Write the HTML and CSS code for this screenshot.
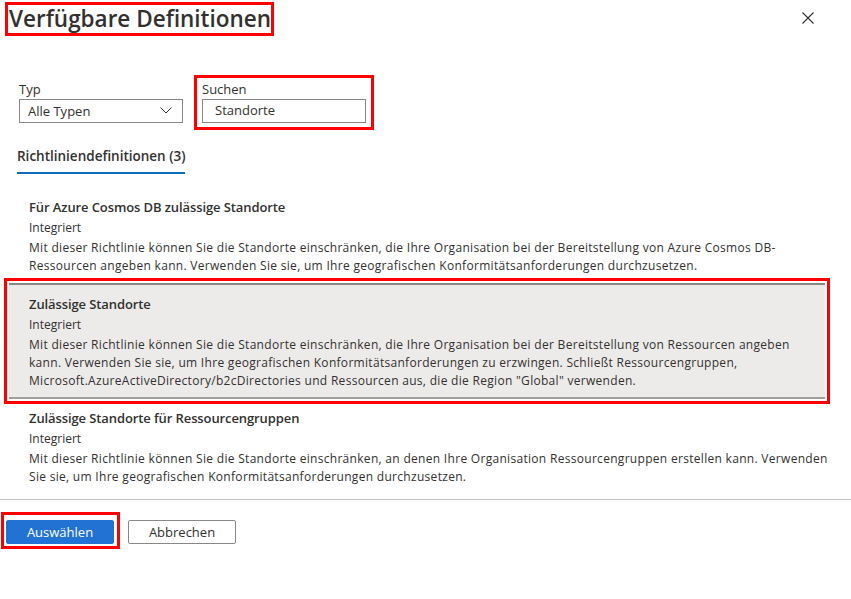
FILE: index.html
```html
<!DOCTYPE html>
<html lang="de">
<head>
<meta charset="utf-8">
<title>Verfügbare Definitionen</title>
<link rel="stylesheet" href="styles.css">
</head>
<body>
<div class="panel">
  <header class="head">
    <h1 class="title mark">Verfügbare Definitionen</h1>
    <button class="close" aria-label="Schließen">
      <svg width="12" height="12" viewBox="0 0 12 12"><path d="M0.5 0.5 L11.5 11.5 M11.5 0.5 L0.5 11.5" stroke="#323130" stroke-width="1.1" fill="none"/></svg>
    </button>
  </header>

  <div class="filters">
    <div class="field typ">
      <label class="lbl">Typ</label>
      <div class="select">
        <span>Alle Typen</span>
        <svg width="12" height="7" viewBox="0 0 12 7"><path d="M0.5 0.5 L6 6 L11.5 0.5" stroke="#323130" stroke-width="1" fill="none"/></svg>
      </div>
    </div>
    <div class="field search mark">
      <label class="lbl">Suchen</label>
      <div class="input">Standorte</div>
    </div>
  </div>

  <div class="tabs"><span class="tab">Richtliniendefinitionen (3)</span></div>

  <div class="list">
    <div class="item">
      <div class="name">Für Azure Cosmos DB zulässige Standorte</div>
      <div class="kind">Integriert</div>
      <div class="desc">Mit dieser Richtlinie können Sie die Standorte einschränken, die Ihre Organisation bei der Bereitstellung von Azure Cosmos DB-<br>Ressourcen angeben kann. Verwenden Sie sie, um Ihre geografischen Konformitätsanforderungen durchzusetzen.</div>
    </div>
    <div class="item selected">
      <div class="name">Zulässige Standorte</div>
      <div class="kind">Integriert</div>
      <div class="desc">Mit dieser Richtlinie können Sie die Standorte einschränken, die Ihre Organisation bei der Bereitstellung von Ressourcen angeben<br>kann. Verwenden Sie sie, um Ihre geografischen Konformitätsanforderungen zu erzwingen. Schließt Ressourcengruppen,<br>Microsoft.AzureActiveDirectory/b2cDirectories und Ressourcen aus, die die Region "Global" verwenden.</div>
    </div>
    <div class="item">
      <div class="name">Zulässige Standorte für Ressourcengruppen</div>
      <div class="kind">Integriert</div>
      <div class="desc">Mit dieser Richtlinie können Sie die Standorte einschränken, an denen Ihre Organisation Ressourcengruppen erstellen kann. Verwenden<br>Sie sie, um Ihre geografischen Konformitätsanforderungen durchzusetzen.</div>
    </div>
  </div>

  <footer class="foot">
    <div class="mark btnwrap"><button class="btn primary">Auswählen</button></div>
    <button class="btn">Abbrechen</button>
  </footer>
</div>
</body>
</html>
```

FILE: styles.css
```css
* { box-sizing: border-box; }
html, body { margin: 0; padding: 0; background: #fff; }
body {
  font-family: "Open Sans", "Noto Sans", sans-serif;
  color: #323130;
  font-size: 12px;
}
.panel { width: 851px; height: 599px; }

.mark { border: 3px solid #ff0000; }

.head {
  display: flex;
  justify-content: space-between;
  align-items: flex-start;
  height: 36px;
}
.title {
  margin: 2px 0 0 5px;
  width: 269px;
  height: 34px;
  padding: 0 0 0 1px;
  font-size: 22.5px;
  font-weight: 600;
  line-height: 28px;
  white-space: nowrap;
  overflow: hidden;
}
.close {
  margin: 12px 37px 0 0;
  padding: 0;
  border: 0;
  background: none;
  width: 12px;
  height: 12px;
  display: flex;
}

.filters {
  display: flex;
  align-items: flex-start;
  gap: 11px;
  margin: 39px 0 0 19px;
}
.field { display: flex; flex-direction: column; }
.lbl { font-size: 13px; line-height: 18px; margin-bottom: 1px; }
.typ { padding-top: 5px; }
.select {
  width: 164px;
  height: 24px;
  border: 1px solid #8a8886;
  display: flex;
  align-items: center;
  justify-content: space-between;
  padding: 0 10px 0 8px;
  font-size: 13px;
}
.select svg { margin-top: -1px; }
.search {
  width: 180px;
  padding: 2px 5px 4px 5px;
}
.input {
  width: 164px;
  height: 24px;
  border: 1px solid #8a8886;
  padding: 0 0 0 12px;
  font-size: 13px;
  line-height: 21px;
}

.tabs { margin: 17px 0 0 17px; }
.tab {
  display: inline-block;
  font-size: 13.5px;
  font-weight: 600;
  line-height: 18px;
  padding-bottom: 7px;
  border-bottom: 2px solid #0f6cbd;
  white-space: nowrap;
}

.list { margin-top: 14px; }
.item {
  padding: 9px 0 8px 20px;
  margin-left: 9px;
  width: 816px;
}
.name { font-size: 13px; font-weight: 600; line-height: 20px; letter-spacing: -0.1px; }
.kind { line-height: 20px; margin-top: 1px; }
.desc { line-height: 18px; margin-top: 1px; white-space: nowrap; letter-spacing: 0.3px; }
.selected {
  background: #edebe9;
  border-top: 2px solid #8a8886;
  border-bottom: 2px solid #a19f9d;
  padding: 9px 0 7px 20px;
  outline: 3px solid #ff0000;
  outline-offset: 2px;
}

.foot {
  margin-top: 5px;
  border-top: 1px solid #c8c6c4;
  padding-top: 12px;
  display: flex;
  align-items: flex-start;
  gap: 8px;
}
.btnwrap { margin-left: 1px; padding: 5px 3px 2px 2px; display: flex; }
.btn {
  font-family: "Open Sans", "Noto Sans", sans-serif;
  font-size: 13px;
  color: #323130;
  background: #fff;
  border: 1px solid #8a8886;
  border-radius: 2px;
  width: 108px;
  height: 24px;
  padding: 0;
  line-height: 20px;
  margin-top: 8px;
}
.btnwrap .btn { margin-top: 0; }
.primary { background: #2272d3; border-color: #2272d3; color: #fff; }
```
